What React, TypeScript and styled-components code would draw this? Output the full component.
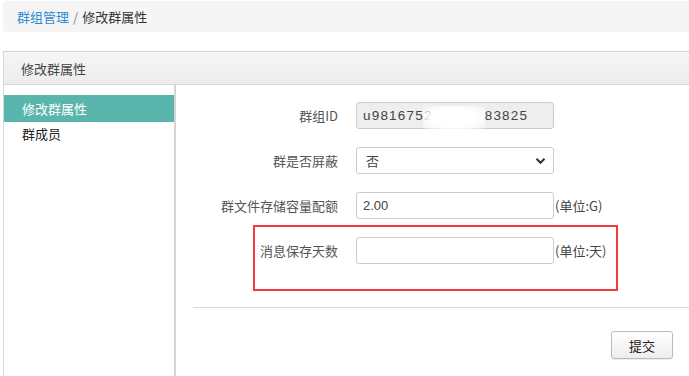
import React from "react";
import styled, { createGlobalStyle } from "styled-components";

const Global = createGlobalStyle`
  html, body { margin: 0; padding: 0; background: #fff; overflow: hidden; }
  body { font-family: "Noto Sans CJK SC", "Liberation Sans", sans-serif; font-size: 13px; color: #333; }
  * { box-sizing: border-box; }
`;

const Page = styled.div`
  width: 720px;
  padding: 1px 0 0 3px;
  height: 376px;
`;

const Crumb = styled.div`
  height: 31px;
  background: #f5f5f5;
  border-radius: 4px;
  padding: 0 14px;
  display: flex;
  align-items: center;
  font-size: 13px;
  color: #333;
`;

const CrumbLink = styled.a`
  color: #2e8bd2;
  text-decoration: none;
`;

const Sep = styled.span`
  color: #888;
  margin: 0 4px;
`;

const Panel = styled.div`
  margin-top: 19px;
  border: 1px solid #d6d6d6;
  border-right: none;
  border-bottom: none;
  height: 330px;
  display: flex;
  flex-direction: column;
`;

const PanelHead = styled.div`
  height: 33px;
  background: linear-gradient(#f6f6f6, #ececec);
  border-bottom: 1px solid #d6d6d6;
  padding-left: 17px;
  display: flex;
  align-items: center;
  color: #444;
`;

const PanelBody = styled.div`
  flex: 1;
  display: flex;
`;

const Side = styled.div`
  width: 172px;
  border-right: 2px solid #d6d6d6;
  padding-top: 10px;
`;

const SideItem = styled.div<{ $active?: boolean }>`
  height: ${(p) => (p.$active ? "27px" : "24px")};
  line-height: ${(p) => (p.$active ? "27px" : "24px")};
  padding-left: 18px;
  background: ${(p) => (p.$active ? "#5ab6ad" : "transparent")};
  color: ${(p) => (p.$active ? "#fff" : "#222")};
`;

const Main = styled.div`
  flex: 1;
  position: relative;
  padding-top: 17px;
  display: flex;
  flex-direction: column;
`;

const Row = styled.div`
  display: flex;
  align-items: center;
  height: 27px;
  margin-bottom: 18px;
`;

const Label = styled.div`
  width: 162px;
  text-align: right;
  color: #555;
  margin-right: 18px;
`;

const Field = styled.div<{ $disabled?: boolean }>`
  width: 198px;
  height: 27px;
  border: 1px solid #ccc;
  border-radius: 3px;
  background: ${(p) => (p.$disabled ? "#eeeeee" : "#fff")};
  display: flex;
  align-items: center;
  padding: 0 6px;
  color: #444;
  position: relative;
  font-family: "Liberation Sans", "Noto Sans CJK SC", sans-serif;
  font-size: 13px;
`;

const IdText = styled.span`
  letter-spacing: 1.2px;
  font-size: 13.5px;
`;

const SelectField = styled(Field)`
  justify-content: space-between;
  padding-left: 9px;
  padding-right: 7px;
  font-family: "Noto Sans CJK SC", sans-serif;
`;

const Blur = styled.span`
  display: inline-block;
  width: 62px;
  height: 24px;
  margin: 4px 0 0 -10px;
  background: radial-gradient(ellipse at center, #fff 50%, rgba(255,255,255,0.7) 72%, rgba(238,238,238,0) 100%);
`;

const Unit = styled.span`
  margin-left: 1px;
  color: #444;
`;

const Highlight = styled.div`
  position: absolute;
  left: 77px;
  top: 140px;
  width: 365px;
  height: 66px;
  border: 2px solid #f03c3c;
  pointer-events: none;
`;

const Divider = styled.div`
  margin: 25px 0 0 17px;
  border-top: 1px solid #d9d9d9;
`;

const Actions = styled.div`
  display: flex;
  padding: 23px 0 0 435px;
`;

const Button = styled.button`
  width: 62px;
  height: 28px;
  border: 1px solid #bbb;
  border-radius: 3px;
  background: linear-gradient(#fff, #ededed);
  font-family: "Noto Sans CJK SC", sans-serif;
  font-size: 13px;
  color: #222;
  box-shadow: 0 1px 1px rgba(0,0,0,0.08);
`;

const Chevron = () => (
  <svg width="11" height="8" viewBox="0 0 11 8">
    <path d="M1.5 1.8 L5.5 5.8 L9.5 1.8" fill="none" stroke="#333" strokeWidth="2" />
  </svg>
);

export default function App() {
  return (
    <>
      <Global />
      <Page>
        <Crumb>
          <CrumbLink href="#">群组管理</CrumbLink>
          <Sep>/</Sep>
          <span>修改群属性</span>
        </Crumb>
        <Panel>
          <PanelHead>修改群属性</PanelHead>
          <PanelBody>
            <Side>
              <SideItem $active>修改群属性</SideItem>
              <SideItem>群成员</SideItem>
            </Side>
            <Main>
              <Row>
                <Label>群组ID</Label>
                <Field $disabled>
                  <IdText>u9816752</IdText>
                  <Blur />
                  <IdText>83825</IdText>
                </Field>
              </Row>
              <Row>
                <Label>群是否屏蔽</Label>
                <SelectField>
                  <span>否</span>
                  <Chevron />
                </SelectField>
              </Row>
              <Row>
                <Label>群文件存储容量配额</Label>
                <Field>2.00</Field>
                <Unit>(单位:G)</Unit>
              </Row>
              <Row>
                <Label>消息保存天数</Label>
                <Field />
                <Unit>(单位:天)</Unit>
              </Row>
              <Highlight />
              <Divider />
              <Actions>
                <Button>提交</Button>
              </Actions>
            </Main>
          </PanelBody>
        </Panel>
      </Page>
    </>
  );
}
